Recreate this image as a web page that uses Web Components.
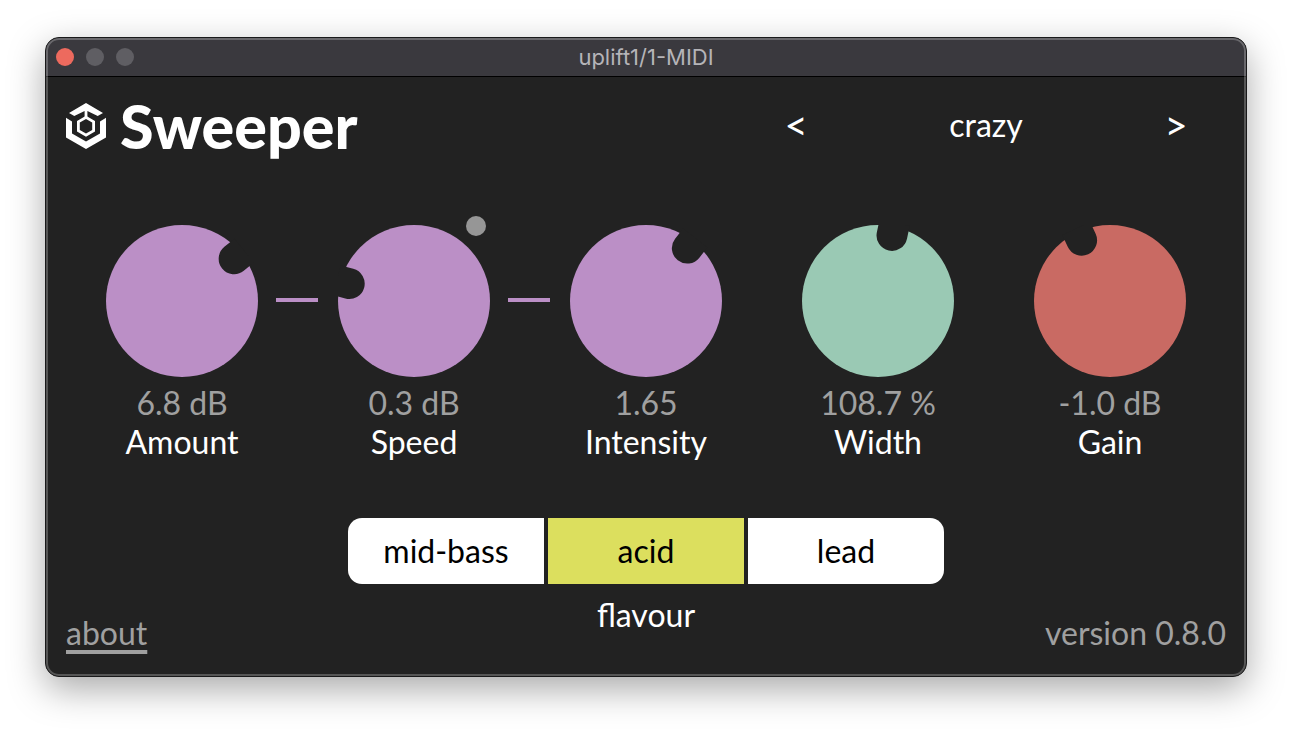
<!DOCTYPE html>
<html lang="en">
<head>
<meta charset="utf-8">
<title>Sweeper</title>
<style>
  html { background: #fff; }
  body { margin: 0; padding: 37px 45px 53px; font-family: Lato, sans-serif; font-size: 32px; color: #fff; }
</style>
</head>
<body>
<plugin-window heading="uplift1/1-MIDI">
  <sweeper-app></sweeper-app>
</plugin-window>

<script>
const define = (name, html, setup) => {
  const template = document.createElement('template');
  template.innerHTML = html;
  customElements.define(name, class extends HTMLElement {
    connectedCallback() {
      if (this.shadowRoot) return;
      const root = this.attachShadow({ mode: 'open' });
      root.append(template.content.cloneNode(true));
      if (setup) setup(this, root);
    }
  });
};

define('plugin-window', `
  <style>
    :host { display: block; box-sizing: border-box; border: 1px solid #19191a; border-radius: 14px;
      background: #222; position: relative; overflow: hidden;
      box-shadow: 0 12px 36px rgba(0,0,0,.34); }
    :host::after { content: ""; position: absolute; inset: 0; border: 2px solid rgba(255,255,255,.24);
      border-radius: 13px; pointer-events: none; }
    header { display: grid; grid-template-columns: 1fr auto 1fr; align-items: center; height: 38px;
      padding: 0 10px; background: #3a393e; border-bottom: 1px solid #000; }
    .lights { display: flex; gap: 12px; }
    button { width: 18px; height: 18px; padding: 0; border: 0; border-radius: 50%; background: #5f5e63; }
    button.close { background: #ed6a5e; }
    h2 { margin: 0; font: 400 22px/24px Inter, sans-serif; color: #b5b4b8; }
  </style>
  <header>
    <div class="lights">
      <button class="close" aria-label="Close"></button>
      <button aria-label="Minimise" disabled></button>
      <button aria-label="Zoom" disabled></button>
    </div>
    <h2></h2>
  </header>
  <slot></slot>`,
  (host, root) => { root.querySelector('h2').textContent = host.getAttribute('heading'); });

define('brand-mark', `
  <style>
    :host { display: flex; align-items: flex-start; gap: 14px; }
    svg { display: block; width: 40px; height: 46px; margin-top: 6px; }
    h1 { margin: 0; font-size: 61px; line-height: 58px; font-weight: 900; }
  </style>
  <svg viewBox="0 0 40 46" fill="#fff" aria-hidden="true">
    <path d="M20 0 37 10 31.700 13 21.400 8V14H18.600V8L8.300 13 3 10Z"/>
    <path d="M0 14.700 6 18.500V30.500L20 38.500 34 30.500V18.500L40 14.700V34.500L20 46 0 34.500Z"/>
    <path fill-rule="evenodd" d="M20 12.700 29 18V28.500L20 33.700 11 28.500V18ZM20 16 13.800 19.600V27L20 30.600 26.200 27V19.600Z"/>
  </svg>
  <h1><slot></slot></h1>`);

define('preset-picker', `
  <style>
    :host { display: grid; grid-template-columns: 100px 1fr 100px; align-items: center; width: 480px; text-align: center; }
    button { font: inherit; font-size: 40px; line-height: 40px; color: inherit; background: none; border: 0; padding: 0; }
    output { line-height: 40px; }
  </style>
  <button aria-label="Previous preset">&lt;</button>
  <output><slot></slot></output>
  <button aria-label="Next preset">&gt;</button>`);

define('rotary-knob', `
  <style>
    :host { display: flex; flex-direction: column; align-items: center; position: relative; }
    .dial { position: relative; width: 152px; height: 152px; color: var(--knob); }
    svg { display: block; width: 100%; height: 100%; }
    input { position: absolute; inset: 0; width: 100%; height: 100%; margin: 0; opacity: 0; }
    output { margin-top: 6px; line-height: 39px; color: #a0a0a0; }
    label { line-height: 39px; }
    .link, .lamp { display: none; position: absolute; }
    :host([linked]) .link { display: block; left: 100%; top: 73px; width: 42px; height: 4px; margin-left: 18px; background: var(--knob); }
    :host([lamp]) .lamp { display: block; right: 4px; top: -9px; width: 20px; height: 20px; border-radius: 50%; background: #969696; }
  </style>
  <div class="dial">
    <svg viewBox="0 0 152 152" aria-hidden="true">
      <circle cx="76" cy="76" r="76" fill="currentColor"/>
      <path d="M60.600 -4V9A15.400 15.400 0 0 0 91.400 9V-4Z" fill="#222"/>
    </svg>
    <input id="dial" type="range" step="any">
    <span class="link"></span>
    <span class="lamp"></span>
  </div>
  <output for="dial"></output>
  <label for="dial"><slot></slot></label>`,
  (host, root) => {
    const input = root.querySelector('input');
    input.min = host.getAttribute('min');
    input.max = host.getAttribute('max');
    input.value = host.getAttribute('value');
    root.querySelector('output').textContent = host.getAttribute('readout');
    root.querySelector('path').setAttribute('transform', 'rotate(' + host.getAttribute('angle') + ' 76 76)');
  });

define('flavour-switch', `
  <style>
    :host { display: block; text-align: center; }
    .options { display: grid; grid-template-columns: repeat(3, 1fr); gap: 4px; border-radius: 14px; overflow: hidden; }
    label { position: relative; line-height: 66px; background: #fff; color: #000; }
    label:has(:checked) { background: #dcdf5e; }
    input { position: absolute; inset: 0; width: 100%; height: 100%; margin: 0; opacity: 0; }
    p { margin: 11px 0 0; line-height: 40px; }
  </style>
  <div class="options" role="radiogroup" aria-labelledby="caption">
    <label><input type="radio" name="flavour">mid-bass</label>
    <label><input type="radio" name="flavour" checked>acid</label>
    <label><input type="radio" name="flavour">lead</label>
  </div>
  <p id="caption">flavour</p>`);

define('sweeper-app', `
  <style>
    :host { display: block; padding: 20px 20px 23px; }
    .top { display: flex; justify-content: space-between; align-items: flex-start; }
    preset-picker { margin-top: 8px; }
    .knobs { display: grid; grid-template-columns: repeat(5, 1fr); margin-top: 70px; }
    .mod { --knob: #bb8fc6; }
    .width { --knob: #9ac9b4; }
    .gain { --knob: #c96a63; }
    .bottom { display: grid; grid-template-columns: 1fr 596px 1fr; align-items: end; margin-top: 57px; }
    a, .version { color: #a0a0a0; line-height: 40px; }
    a { justify-self: start; text-decoration: underline 4px; text-underline-offset: 5px; text-decoration-skip-ink: none; }
    .version { justify-self: end; }
    flavour-switch { padding-bottom: 18px; }
  </style>
  <div class="top">
    <brand-mark>Sweeper</brand-mark>
    <preset-picker>crazy</preset-picker>
  </div>
  <div class="knobs">
    <rotary-knob class="mod" linked min="0" max="10" value="6.8" readout="6.8 dB" angle="51">Amount</rotary-knob>
    <rotary-knob class="mod" linked lamp min="0" max="2" value="0.3" readout="0.3 dB" angle="-75">Speed</rotary-knob>
    <rotary-knob class="mod" min="1" max="2" value="1.65" readout="1.65" angle="38">Intensity</rotary-knob>
    <rotary-knob class="width" min="0" max="200" value="108.7" readout="108.7 %" angle="12">Width</rotary-knob>
    <rotary-knob class="gain" min="-6" max="6" value="-1" readout="-1.0 dB" angle="-25">Gain</rotary-knob>
  </div>
  <div class="bottom">
    <a href="#about">about</a>
    <flavour-switch></flavour-switch>
    <span class="version">version 0.8.0</span>
  </div>`);
</script>
</body>
</html>
